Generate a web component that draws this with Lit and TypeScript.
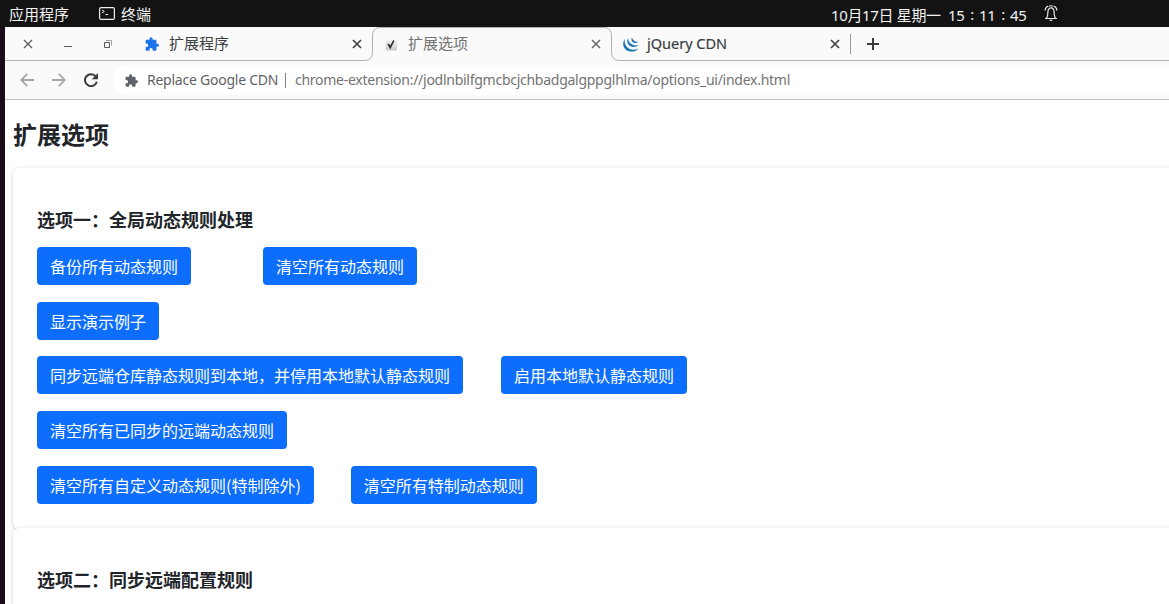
import { LitElement, html, css } from "lit";
import { customElement, property } from "lit/decorators.js";

const PUZZLE =
  "M20.5 11H19V7c0-1.1-.9-2-2-2h-4V3.5a2.5 2.5 0 0 0-5 0V5H4c-1.1 0-2 .9-2 2v3.8h1.5a2.7 2.7 0 0 1 0 5.4H2V20c0 1.1.9 2 2 2h3.8v-1.500a2.700 2.700 0 0 1 5.400 0V22H17c1.100 0 2-.9 2-2v-4h1.500a2.500 2.500 0 0 0 0-5z";

const puzzle = (size: number) => html`<svg width=${size} height=${size} viewBox="1 0.5 22 22" fill="currentColor"><path d=${PUZZLE} /></svg>`;

const cross = (size: number, weight: number) => html`<svg width=${size} height=${size} viewBox="0 0 10 10" fill="none" stroke="currentColor" stroke-width=${weight}>
  <path d="M1 1 9 9M9 1 1 9" />
</svg>`;

@customElement("desktop-bar")
class DesktopBar extends LitElement {
  static styles = css`
    :host { display: flex; height: 27px; background: #131313; color: #f2f2f2; align-items: center;
      font: 15px/27px "Noto Sans", "Noto Sans CJK SC", sans-serif; white-space: pre; }
    svg { display: block; flex: none; }
    .apps { margin-left: 9px; width: 90px; padding-top: 2px; box-sizing: border-box; }
    .term { margin-left: 6px; padding-top: 2px; width: 710px; flex: none; box-sizing: border-box; }
    .clock { width: 213px; padding-top: 3px; display: flex; flex: none; font-size: 15px; }
    .date { width: 117px; letter-spacing: -0.35px; }
    .time { display: grid; grid-template-columns: 17px 14px 17px 14px 18px; letter-spacing: -0.4px; }
    .sep { text-align: center; line-height: 24px; }
    .bell { margin-top: -1px; }
  `;
  render() {
    return html`
      <span class="apps">应用程序</span>
      <svg width="16" height="13" viewBox="0 0 16 13" fill="none" stroke="#eee">
        <rect x=".6" y=".6" width="14.800" height="11.800" rx="1.500" stroke-width="1.200" />
        <path d="m3 3 2.300 1.500L3 6M6.500 7.500h2.700" />
      </svg>
      <span class="term">终端</span>
      <div class="clock">
        <span class="date">10月17日 星期一</span>
        <span class="time"><span>15</span><span class="sep">:</span><span>11</span><span class="sep">:</span><span>45</span></span>
      </div>
      <svg class="bell" width="14" height="17" viewBox="0 0 14 17" fill="none" stroke="#e8e8e8" stroke-width="1.200">
        <path d="M1 13.500h12M2.500 13.200c1-1.500 1.300-2.500 1.300-5C3.800 5 4.700 2.900 7 2.900S10.200 5 10.200 8.200c0 2.500.3 3.500 1.300 5M4.300 1C2.300 1.800 1.200 3.300 1.100 5.500M9.700 1c2 .8 3.100 2.300 3.200 4.500M5.200 1.300c1-.6 2.600-.6 3.600 0" />
        <path d="M5 14.800h4L7.700 16H6.300z" fill="#e8e8e8" stroke="none" />
      </svg>`;
  }
}

@customElement("tab-strip")
class TabStrip extends LitElement {
  static styles = css`
    :host { display: flex; height: 34px; position: relative; background: #fafafa; color: #3c4043; align-items: center;
      font: 15px/34px "Noto Sans", "Noto Sans CJK SC", sans-serif; }
    .edge { position: absolute; inset: 0; pointer-events: none; }
    svg { display: block; flex: none; }
    .controls { display: grid; grid-template-columns: repeat(3, 40px); margin-left: 3px; justify-items: center; align-items: center; color: #5b5b5b; width: 120px; flex: none; }
    .tab { display: flex; width: 239px; flex: none; align-items: center; box-sizing: border-box; }
    .first { width: 244px; padding-left: 17px; color: #3c4043; }
    .icon { width: 16px; margin-right: 8px; color: #1a73e8; flex: none; }
    .title { flex: 1; white-space: nowrap; margin-top: -2px; }
    .close { margin-right: 10px; color: #3c4043; }
    .active { padding-left: 13px; color: #717171; }
    .active .icon { margin-right: 7px; }
    .active .close { color: #666; }
    .last { padding-left: 12px; }
    .last .title { font-size: 14.500px; -webkit-text-stroke: 0.2px currentColor; }
    .divider { width: 1px; height: 20px; background: #9b9b9b; margin-right: 16px; }
  `;
  render() {
    return html`
      <svg class="edge" width="1164" height="34" fill="none" stroke="#b1b1b1">
        <path d="M0 33.500H359.500q8 0 8-8V8.500q0-8 8-8H598.500q8 0 8 8V25.500q0 8 8 8H1164" />
      </svg>
      <div class="controls">
        ${cross(10, 1.2)}
        <svg width="8" height="10" stroke="currentColor"><path d="M0 7.500h8" /></svg>
        <svg width="8" height="8" fill="none" stroke="currentColor"><path d="M.5 2.500h5v5h-5z" /><path d="M2 .5h5.500v5" stroke="#a0a0a0" /></svg>
      </div>
      <div class="tab first"><span class="icon">${puzzle(14)}</span><span class="title">扩展程序</span><span class="close">${cross(10, 1.7)}</span></div>
      <div class="tab active">
        <span class="icon"><svg width="13" height="13" viewBox="0 0 13 13">
          <defs><linearGradient id="plate" x2="0" y2="1"><stop stop-color="#f7f7f7" /><stop offset="1" stop-color="#c8c8c8" /></linearGradient></defs>
          <rect x=".5" y="1" width="11.500" height="11.500" rx="1.500" fill="url(#plate)" />
          <path d="M3.200 5.800 5.200 9.500 8.800 2.500" fill="none" stroke="#222" stroke-width="1.600" />
        </svg></span>
        <span class="title">扩展选项</span><span class="close">${cross(10, 1.5)}</span>
      </div>
      <div class="tab last">
        <span class="icon"><svg width="16" height="15" viewBox="0 0 16 15" fill="#1a73b5">
          <path d="M2 1.800C-.8 5.600-.2 10.500 3.300 13c3.800 2.600 9.300 2 12-1.600-2.800 1.600-6 1.900-8.700.6C2.600 10.200.8 6 2 1.800z" />
          <path d="M5.300.8c-1.900 3-.9 6.800 2 8.300 2.600 1.400 6 1.100 8.200-1-2.200.7-4.400.5-6.300-.5C6.300 6.200 4.700 3.600 5.300.8z" />
          <path d="M9 .3C7.900 2.400 8.500 4.500 10.300 5.400c1.700.9 3.700.7 5.200-.6-1.600.2-3-.1-4.100-.9C9.900 2.900 9 1.800 9 .3z" />
        </svg></span>
        <span class="title">jQuery CDN</span><span class="close">${cross(10, 1.7)}</span>
      </div>
      <span class="divider"></span>
      <svg width="12" height="12" stroke="#3c3c3c" stroke-width="2"><path d="M0 6h12M6 0v12" /></svg>`;
  }
}

@customElement("address-bar")
class AddressBar extends LitElement {
  static styles = css`
    :host { display: flex; height: 39px; box-sizing: border-box; background: #fafafa; border-bottom: 1px solid #c4c4c4; align-items: center;
      padding-left: 15px; font: 14px/30px "Noto Sans", sans-serif; color: #5f6368; }
    svg { display: block; flex: none; }
    .nav { display: flex; gap: 18px; width: 93px; flex: none; }
    .pill { display: flex; align-items: center; flex: 1; height: 30px; background: #fff; border-radius: 15px 0 0 15px; padding-left: 12px; white-space: nowrap; }
    .name { margin-left: 9px; width: 138px; letter-spacing: -0.24px; flex: none; }
    .bar { width: 1px; height: 15px; background: #858585; margin-right: 9px; }
    .url { color: #737373; letter-spacing: -0.265px; }
  `;
  render() {
    return html`
      <div class="nav">
        <svg width="14" height="14" fill="none" stroke="#a6a6a6" stroke-width="1.800"><path d="M14 7H1.500M7.200.8 1.200 7l6 6.200" /></svg>
        <svg width="14" height="14" fill="none" stroke="#a6a6a6" stroke-width="1.800"><path d="M0 7h12.500M6.800.8l6 6.200-6 6.200" /></svg>
        <svg width="14" height="14" fill="none" stroke="#3c3c3c" stroke-width="2"><path d="M11.800 3.500A6 6 0 1 0 12.800 8.800" /><path d="M14 0v6.200H7.800z" fill="#3c3c3c" stroke="none" /></svg>
      </div>
      <div class="pill">${puzzle(13)}<span class="name">Replace Google CDN</span><span class="bar"></span><span class="url">chrome-extension://jodlnbilfgmcbcjchbadgalgppglhlma/options_ui/index.html</span></div>`;
  }
}

@customElement("option-card")
class OptionCard extends LitElement {
  @property() heading = "";
  @property({ attribute: false }) rows: { gap: number; labels: string[] }[] = [];
  static styles = css`
    :host { display: block; box-sizing: border-box; height: 361px; padding: 39px 24px 0; background: #fff; border-radius: 6px;
      box-shadow: 0 1px 4px rgba(0, 0, 0, 0.2); }
    h2 { margin: 0 0 13px; font-size: 18px; line-height: 27px; font-weight: 700; }
    .rows { display: grid; gap: 16.700px; }
    .row { display: flex; }
    button { height: 38px; border: 0; border-radius: 4px; padding: 0 13px; background: #0d6efd; color: #fff;
      font: 16px/24px "Noto Sans CJK SC", sans-serif; white-space: nowrap; }
  `;
  render() {
    return html`<h2>${this.heading}</h2>
      <div class="rows">
        ${this.rows.map((r) => html`<div class="row" style="gap:${r.gap}px">${r.labels.map((l) => html`<button>${l}</button>`)}</div>`)}
      </div>`;
  }
}

@customElement("app-root")
class AppRoot extends LitElement {
  static styles = css`
    :host { display: block; height: 604px; overflow: hidden; background: #1b0d17; }
    .window { margin-left: 5px; height: 577px; background: #fff; overflow: hidden; }
    .page { padding-left: 8px; color: #212529; font-family: "Noto Sans", "Noto Sans CJK SC", sans-serif; }
    h1 { margin: 0; padding-top: 18px; height: 67px; box-sizing: border-box; font-size: 24px; line-height: 34px; font-weight: 700; }
    .cards { display: grid; margin: 1px -8px 0 0; grid-auto-rows: 360px; }
  `;
  private rows = [
    { gap: 72, labels: ["备份所有动态规则", "清空所有动态规则"] },
    { gap: 0, labels: ["显示演示例子"] },
    { gap: 38, labels: ["同步远端仓库静态规则到本地，并停用本地默认静态规则", "启用本地默认静态规则"] },
    { gap: 0, labels: ["清空所有已同步的远端动态规则"] },
    { gap: 37, labels: ["清空所有自定义动态规则(特制除外)", "清空所有特制动态规则"] },
  ];
  render() {
    return html`
      <desktop-bar></desktop-bar>
      <div class="window">
        <tab-strip></tab-strip>
        <address-bar></address-bar>
        <div class="page">
          <h1>扩展选项</h1>
          <div class="cards">
            <option-card heading="选项一：全局动态规则处理" .rows=${this.rows}></option-card>
            <option-card heading="选项二：同步远端配置规则"></option-card>
          </div>
        </div>
      </div>`;
  }
}
